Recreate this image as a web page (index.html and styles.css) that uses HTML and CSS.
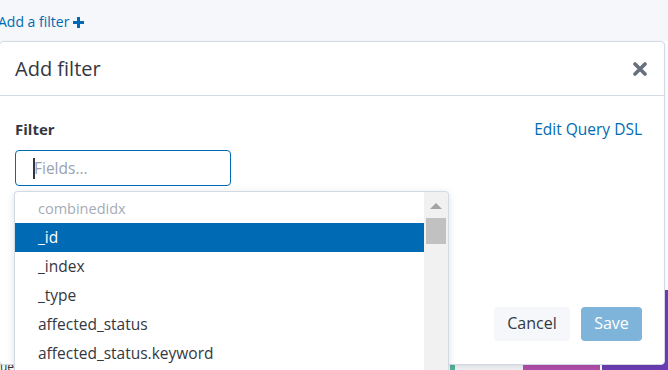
FILE: index.html
```html
<!DOCTYPE html>
<html>
<head>
<meta charset="utf-8">
<link rel="stylesheet" href="styles.css">
</head>
<body>
<div class="topbar">
  <span class="add-link">Add a filter</span>
  <svg class="plus" width="11" height="11" viewBox="0 0 11 11"><path d="M4 0h3v4h4v3H7v4H4V7H0V4h4z" fill="#006bb4"/></svg>
</div>
<div class="page">
  <div class="page-left"><span class="frag">ue</span></div>
  <div class="blk green"></div>
  <div class="blk grey"></div>
  <div class="blk magenta"></div>
  <div class="blk purple"></div>
</div>

<div class="modal">
  <div class="modal-header">
    <span class="modal-title">Add filter</span>
    <svg class="close" width="14" height="14" viewBox="0 0 14 14"><path d="M2 2L12 12M12 2L2 12" stroke="#69707d" stroke-width="3.6" stroke-linecap="round"/></svg>
  </div>
  <div class="modal-body">
    <div class="label-row">
      <span class="label">Filter</span>
      <span class="link">Edit Query DSL</span>
    </div>
    <div class="field"><span class="caret"></span><span class="placeholder">Fields...</span></div>
  </div>
  <div class="modal-footer">
    <span class="btn btn-cancel">Cancel</span>
    <span class="btn btn-save">Save</span>
  </div>
</div>

<div class="dropdown">
  <div class="list">
    <div class="group">combinedidx</div>
    <div class="opt selected">_id</div>
    <div class="opt">_index</div>
    <div class="opt">_type</div>
    <div class="opt">affected_status</div>
    <div class="opt">affected_status.keyword</div>
  </div>
  <div class="scrollbar">
    <div class="arrow"></div>
    <div class="thumb"></div>
  </div>
</div>
</body>
</html>
```
FILE: styles.css
```css
* { box-sizing: border-box; }
html, body { margin: 0; padding: 0; }
body {
  width: 668px;
  height: 370px;
  overflow: hidden;
  position: relative;
  background: #fff;
  font-family: "Open Sans", "Liberation Sans", sans-serif;
  color: #343741;
}
.topbar {
  height: 41px;
  background: #f5f7fa;
  display: flex;
  align-items: center;
  padding-top: 2px;
  gap: 4px;
}
.add-link {
  color: #006bb4;
  font-size: 14px;
  margin-left: -2px;
}
.plus { margin-top: 1px; }
.page {
  height: 329px;
  display: flex;
  align-items: flex-end;
}
.page-left {
  width: 450px;
  align-self: flex-end;
}
.frag {
  display: block;
  font-size: 12px;
  line-height: 8px;
  height: 7px;
  overflow: hidden;
  color: #343741;
}
.blk { height: 7px; }
.green { width: 5px; background: #54b399; }
.grey { width: 68px; background: #eef0f3; }
.magenta { width: 77px; height: 40px; background: #b04ea9; }
.purple { flex: 1; height: 80px; background: #6b3db4; border-left: 2px solid #fff; }

.modal {
  position: absolute;
  left: -1px;
  top: 41px;
  width: 666px;
  height: 324px;
  background: #fff;
  border: 1px solid #d3dae6;
  border-radius: 4px;
  box-shadow: 0 2px 4px rgba(0,0,0,0.08);
  display: flex;
  flex-direction: column;
}
.modal-header {
  height: 54px;
  border-bottom: 1px solid #d3dae6;
  display: flex;
  align-items: center;
  justify-content: space-between;
  padding: 0 17px 0 15px;
}
.modal-title {
  font-size: 20px;
  font-weight: 400;
  color: #343741;
}
.modal-body {
  flex: 1;
  padding: 21px 22px 0 15px;
}
.label-row {
  display: flex;
  justify-content: space-between;
  align-items: center;
  height: 24px;
}
.label {
  font-weight: 700;
  font-size: 15px;
  color: #343741;
}
.link {
  color: #006bb4;
  font-size: 15.5px;
}
.field {
  margin-top: 9px;
  width: 216px;
  height: 36px;
  border: 1px solid #006bb4;
  border-radius: 4px;
  display: flex;
  align-items: center;
  padding-left: 17px;
}
.caret {
  width: 2px;
  height: 21px;
  background: #343741;
}
.placeholder {
  color: #98a2b3;
  font-size: 15.5px;
  margin-left: -1px;
}
.modal-footer {
  display: flex;
  justify-content: flex-end;
  gap: 11px;
  padding: 0 22px 23px 0;
}
.btn {
  height: 34px;
  border-radius: 4px;
  display: flex;
  align-items: center;
  justify-content: center;
  font-size: 16px;
  padding-bottom: 2px;
}
.btn-cancel {
  width: 76px;
  background: #f5f7fa;
  color: #343741;
}
.btn-save {
  width: 61px;
  background: #7fb4da;
  color: #fff;
}

.dropdown {
  position: absolute;
  left: 14px;
  top: 191px;
  width: 435px;
  height: 179px;
  background: #fff;
  border: 1px solid #d3dae6;
  border-bottom: none;
  border-radius: 4px 4px 0 0;
  box-shadow: 0 2px 8px rgba(0,0,0,0.12);
  display: flex;
  overflow: hidden;
}
.list {
  flex: 1;
  padding-top: 3px;
}
.group {
  height: 28px;
  display: flex;
  align-items: center;
  padding-left: 23px;
  padding-bottom: 1px;
  color: #a5acb8;
  font-size: 14.5px;
}
.opt {
  height: 29px;
  display: flex;
  align-items: center;
  padding-left: 23px;
  padding-bottom: 2px;
  font-size: 15.5px;
  color: #343741;
}
.opt.selected {
  background: #006bb4;
  color: #fff;
}
.scrollbar {
  width: 24px;
  background: #f1f1f1;
  display: flex;
  flex-direction: column;
  align-items: center;
  padding-top: 11px;
}
.arrow {
  width: 0;
  height: 0;
  border-left: 6px solid transparent;
  border-right: 6px solid transparent;
  border-bottom: 6px solid #a3a3a3;
}
.thumb {
  margin-top: 9px;
  width: 20px;
  height: 26px;
  background: #c1c1c1;
}
```
